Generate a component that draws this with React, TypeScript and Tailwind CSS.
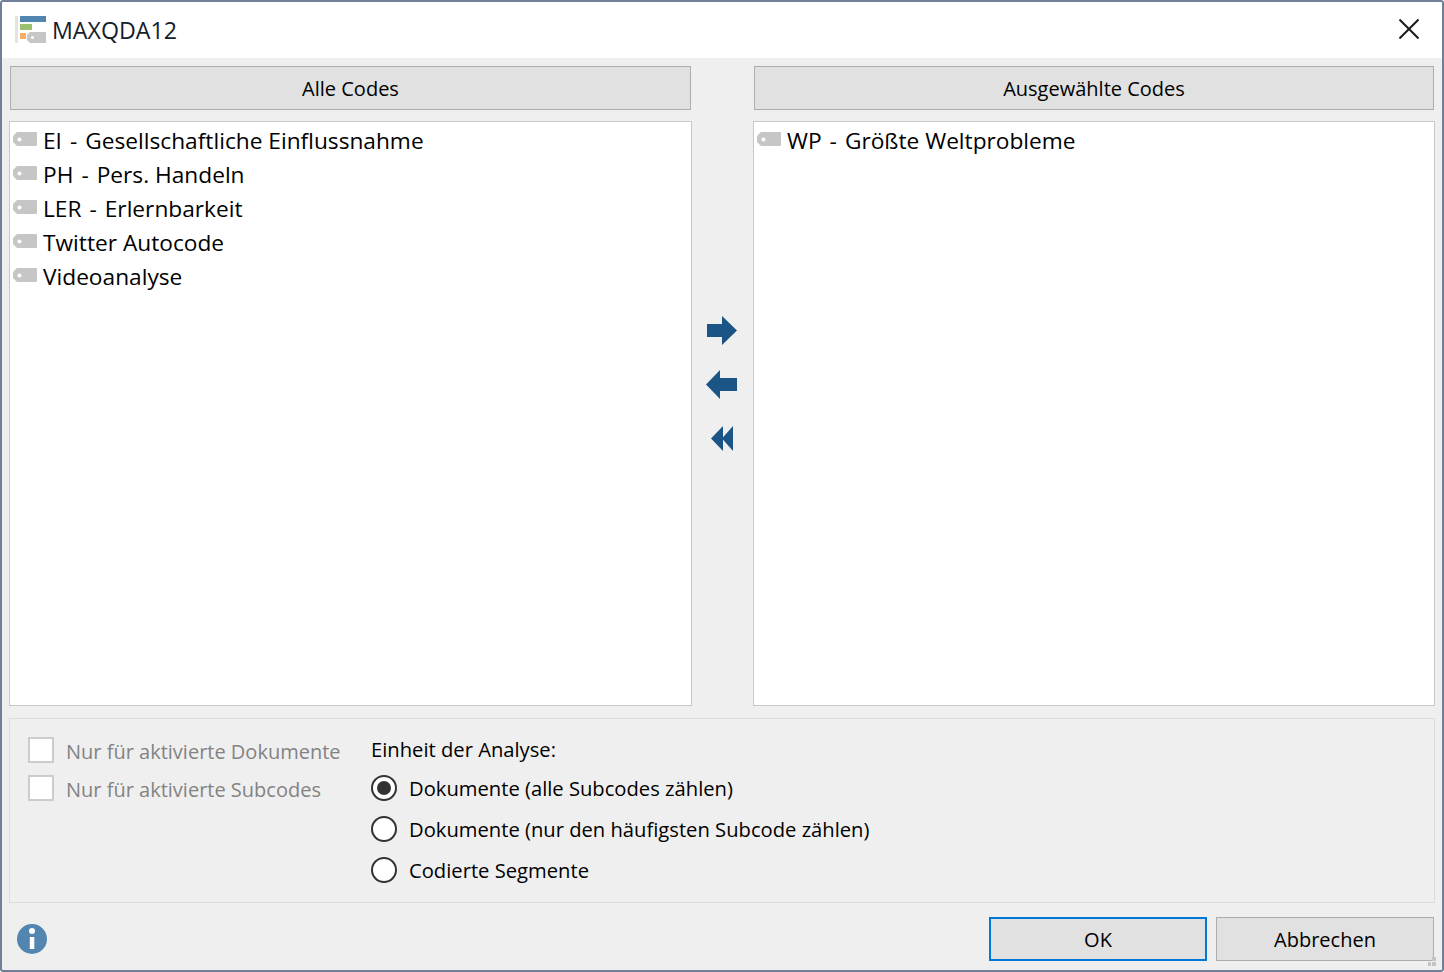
const font = "font-['Open_Sans','Noto_Sans',sans-serif]";

function TagIcon() {
  return (
    <svg width="24" height="14" viewBox="0 0 24 14" className="shrink-0">
      <path d="M4 0H23a1 1 0 0 1 1 1V13a1 1 0 0 1-1 1H4L0 10V4Z" fill="#c6c6c6" />
      <rect x="4.500" y="5.500" width="4" height="4" rx="2" fill="#fff" />
    </svg>
  );
}

function CodeRow({ code, name }: { code: string; name?: string }) {
  return (
    <div className="flex h-[34px] items-center">
      <div className="ml-[3px] mr-[6px] -mt-[4px] flex">
        <TagIcon />
      </div>
      <span className="flex whitespace-pre text-[22.7px] text-black">
        {code}
        {name && <span className="mx-[8px]">-</span>}
        {name}
      </span>
    </div>
  );
}

function ColumnHeader({ label }: { label: string }) {
  return (
    <div className="mx-px flex h-[44px] items-center justify-center border border-[#adadad] bg-[#e1e1e1] pt-[2px] text-[20px] text-black">
      {label}
    </div>
  );
}

function CodeList({ items }: { items: [string, string?][] }) {
  return (
    <div className="mt-[11px] h-[585px] border border-[#c8c8c8] bg-white pt-[2px]">
      {items.map(([code, name]) => (
        <CodeRow key={code} code={code} name={name} />
      ))}
    </div>
  );
}

function Disabled({ label }: { label: string }) {
  return (
    <div className="flex h-[38px] items-center gap-[12px]">
      <div className="h-[26px] w-[26px] border-2 border-[#cccccc] bg-white" />
      <span className="mt-[4px] text-[20px] text-[#838383]">{label}</span>
    </div>
  );
}

function Radio({ label, checked }: { label: string; checked?: boolean }) {
  return (
    <div className="flex h-[41px] items-center gap-[12px]">
      <div className="mb-[4px] flex h-[26px] w-[26px] items-center justify-center rounded-full border-2 border-[#333333] bg-white">
        {checked && <div className="h-[14px] w-[14px] rounded-full bg-[#333333]" />}
      </div>
      <span className="mb-[2px] text-[20.2px] text-black">{label}</span>
    </div>
  );
}

export default function App() {
  return (
    <div className={`flex h-[972px] w-[1444px] flex-col overflow-hidden rounded-[3px] border-2 border-[#6f8098] bg-[#efefef] ${font}`}>
      {/* Title bar */}
      <div className="flex h-[56px] shrink-0 items-center justify-between bg-white pl-[13px] pr-[23px]">
        <div className="flex items-center gap-[6px]">
          <svg width="31" height="28" viewBox="0 0 31 28">
            <rect x="0" y="0" width="3" height="27" fill="#e3e3e3" />
            <rect x="5" y="0" width="26" height="6" fill="#5286b0" />
            <rect x="5" y="8" width="12" height="6" fill="#9bc06e" />
            <rect x="5" y="17" width="6" height="6" fill="#f9ae68" />
            <path d="M15 16H31V27H15L12 24V19Z" fill="#c6c6c6" />
            <rect x="16" y="20" width="3" height="3" rx="1.500" fill="#fff" />
          </svg>
          <span className="mt-[1px] text-[23.2px] text-[#14202c]">MAXQDA12</span>
        </div>
        <svg width="20" height="20" viewBox="0 0 20 20" stroke="#1a1a1a" strokeWidth="2" className="mb-[2px]">
          <path d="M0.500 0.500L19.500 19.500M19.500 0.500L0.500 19.500" />
        </svg>
      </div>

      {/* Lists */}
      <div className="flex px-[7px] pt-[8px]">
        <div className="w-[683px]">
          <ColumnHeader label="Alle Codes" />
          <CodeList
            items={[
              ["EI", "Gesellschaftliche Einflussnahme"],
              ["PH", "Pers. Handeln"],
              ["LER", "Erlernbarkeit"],
              ["Twitter Autocode"],
              ["Videoanalyse"],
            ]}
          />
        </div>
        <div className="flex w-[61px] flex-col items-start pl-[14px] pt-[250px]">
          <svg width="30" height="29" viewBox="0 0 30 29" fill="#1b5586" className="ml-[1px]">
            <path d="M0 8H15V0L30 14.500L15 29V21H0Z" />
          </svg>
          <svg width="31" height="29" viewBox="0 0 31 29" fill="#1b5586" className="mt-[25px]">
            <path d="M31 8H14V0L0 14.500L14 29V21H31Z" />
          </svg>
          <svg width="22" height="25" viewBox="0 0 22 25" fill="#1b5586" className="ml-[5px] mt-[27px]">
            <path d="M12 0V25L0 12.500Z M22 0V25L11 12.500Z" />
          </svg>
        </div>
        <div className="w-[682px]">
          <ColumnHeader label="Ausgewählte Codes" />
          <CodeList items={[["WP", "Größte Weltprobleme"]]} />
        </div>
      </div>

      {/* Options */}
      <div className="mx-[7px] mt-[12px] flex h-[185px] border border-[#dcdcdc] pl-[18px] pt-[12px]">
        <div className="w-[343px]">
          <Disabled label="Nur für aktivierte Dokumente" />
          <Disabled label="Nur für aktivierte Subcodes" />
        </div>
        <div>
          <div className="flex h-[38px] items-center pb-[2px] text-[20.2px] text-black">Einheit der Analyse:</div>
          <Radio label="Dokumente (alle Subcodes zählen)" checked />
          <Radio label="Dokumente (nur den häufigsten Subcode zählen)" />
          <Radio label="Codierte Segmente" />
        </div>
      </div>

      {/* Footer */}
      <div className="relative flex flex-1 items-start justify-between pl-[15px] pr-[8px] pt-[14px]">
        <svg width="30" height="30" viewBox="0 0 30 30" className="mt-[7px]">
          <circle cx="15" cy="15" r="15" fill="#5286b0" />
          <circle cx="15" cy="7" r="3" fill="#fff" />
          <rect x="12.800" y="13" width="4.500" height="12" fill="#fff" />
        </svg>
        <div className="flex gap-[9px]">
          <div className="flex h-[44px] w-[218px] items-center justify-center border-2 border-[#0078d7] bg-[#e1e1e1] pt-[2px] text-[20px] text-black">OK</div>
          <div className="flex h-[44px] w-[218px] items-center justify-center border border-[#adadad] bg-[#e1e1e1] pt-[2px] text-[20px] text-black">Abbrechen</div>
        </div>
        {/* Size grip */}
        <svg width="9" height="9" viewBox="0 0 9 9" fill="#c4c4c4" className="absolute bottom-[4px] right-[5px]">
          <rect x="4" y="0" width="4" height="4" />
          <rect x="0" y="5" width="3" height="4" />
          <rect x="4" y="5" width="4" height="4" />
        </svg>
      </div>
    </div>
  );
}
